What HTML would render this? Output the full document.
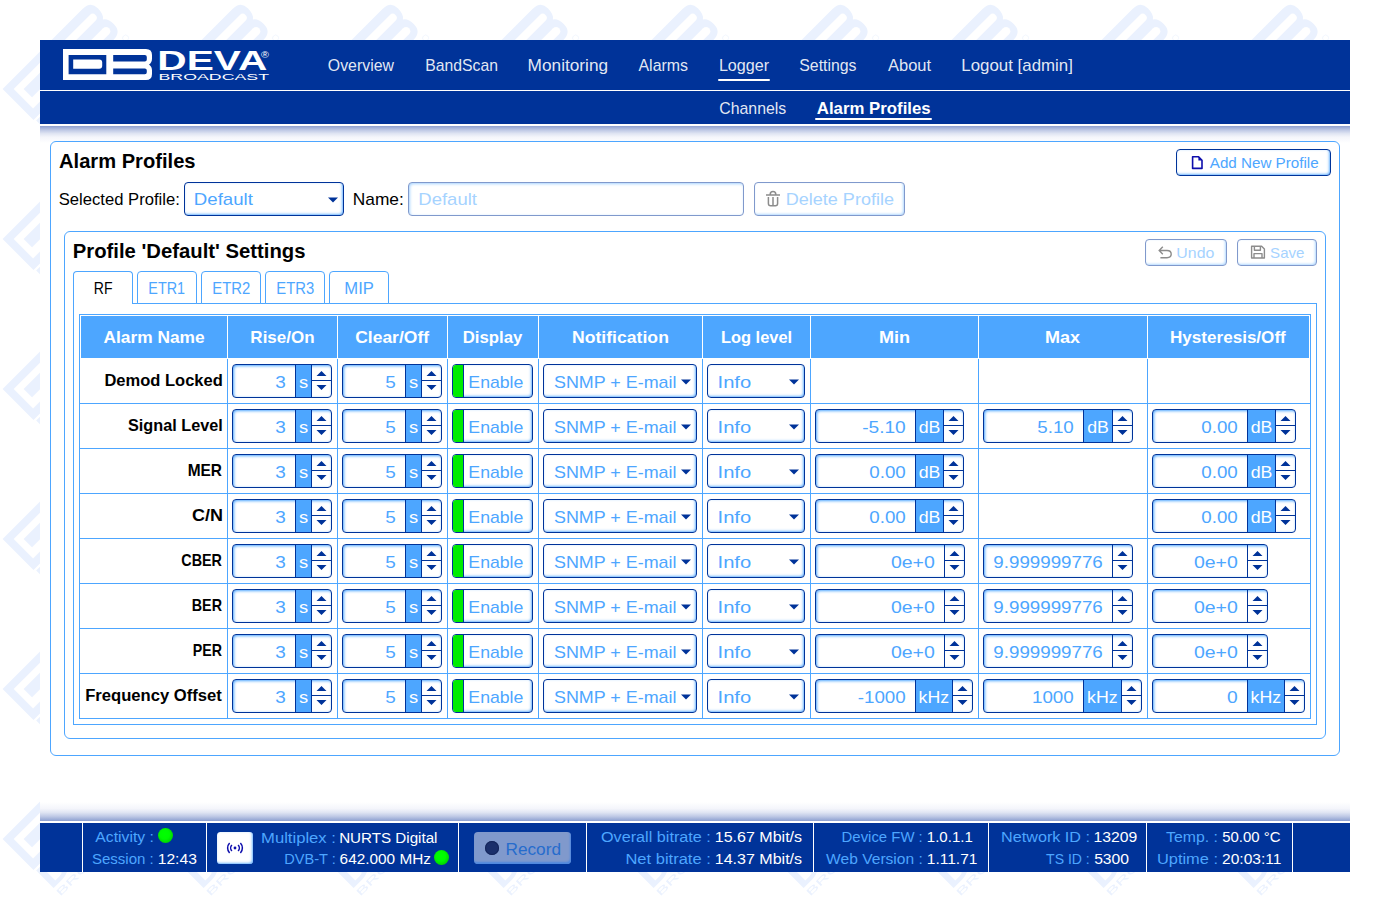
<!DOCTYPE html>
<html><head><meta charset="utf-8"><title>Alarm Profiles</title>
<style>
html,body{margin:0;padding:0}
body{width:1390px;height:912px;position:relative;overflow:hidden;background:#fff;font-family:"Liberation Sans", sans-serif}
body>div{position:absolute}
.c{box-sizing:border-box;border:1px solid #003399;border-radius:4px;background:#fff;overflow:hidden}
.c i{position:absolute;display:block;top:0;bottom:0}
.c{position:absolute}
.u{background:#4da6ff;border-left:1px solid #003399;box-sizing:border-box}
.sd{width:1px;background:#003399}
.c .sm{top:15px;bottom:auto;height:1px;right:0;background:#003399}
.g{left:0;width:10px;background:#00ec00;border-right:1px solid #003399}
svg text{font-family:"Liberation Sans", sans-serif}
</style></head><body>
<svg style="position:absolute;left:0;top:0" width="1390" height="912"><defs><pattern id="wm" width="150" height="150" patternUnits="userSpaceOnUse"><g transform="translate(2.6 89) rotate(-45)" fill="#eaf1fe"><path d="M0 0H113Q124.5 0 124.5 10.5Q124.5 19 120 21.8Q124.5 24.5 124.5 33Q124.5 43.7 113 43.7H0Z"/><g fill="#fff"><path d="M7.8 7.8H61V35.3H7.8Z"/><path d="M70.8 9.4H114a4.05 4.05 0 0 1 0 8.1H70.8Z"/><path d="M70.8 28H114a4.3 4.3 0 0 1 0 8.6H70.8Z"/></g><path d="M14.9 14.9H50a5.9 5.9 0 0 1 0 11.8H14.9Z"/><text x="-1.5" y="70.6" font-size="35.7" font-weight="bold" textLength="120" lengthAdjust="spacingAndGlyphs">DEVA</text><text x="0" y="81.5" font-size="10.2" textLength="125" lengthAdjust="spacingAndGlyphs">BROADCAST</text><circle cx="123" cy="51" r="3" fill="none" stroke="#eaf1fe" stroke-width="0.8" stroke-opacity="0.7"/></g></pattern></defs><rect width="1350" height="900" fill="url(#wm)"/></svg>
<div style="left:40px;top:40px;width:1310px;height:832px;background:#fff"></div>
<div style="left:40px;top:40px;width:1310px;height:50px;background:#003399"></div>
<div style="left:40px;top:91px;width:1310px;height:33px;background:#003399"></div>
<div style="left:40px;top:126px;width:1310px;height:17px;background:linear-gradient(to bottom,#8c9fd0 0%,#c0cae6 25%,#e0e5f3 45%,#f4f5fb 65%,#fff 100%)"></div>
<div style="left:40px;top:802px;width:1310px;height:19px;background:linear-gradient(to top,#8c9fd0 0%,#c0cae6 25%,#e0e5f3 45%,#f4f5fb 65%,#fff 100%)"></div>
<div style="left:40px;top:823px;width:1310px;height:49px;background:#003399"></div>
<div style="left:82px;top:823px;width:1px;height:49px;background:#fff"></div>
<div style="left:206px;top:823px;width:1px;height:49px;background:#fff"></div>
<div style="left:458px;top:823px;width:1px;height:49px;background:#fff"></div>
<div style="left:586px;top:823px;width:1px;height:49px;background:#fff"></div>
<div style="left:813px;top:823px;width:1px;height:49px;background:#fff"></div>
<div style="left:988px;top:823px;width:1px;height:49px;background:#fff"></div>
<div style="left:1146px;top:823px;width:1px;height:49px;background:#fff"></div>
<div style="left:1292px;top:823px;width:1px;height:49px;background:#fff"></div>
<div style="left:50px;top:141px;width:1290px;height:615px;border:1px solid #4da6ff;border-radius:6px;box-sizing:border-box;background:#fff"></div>
<div style="left:64px;top:231px;width:1262px;height:508px;border:1px solid #4da6ff;border-radius:6px;box-sizing:border-box;background:#fff"></div>
<div style="left:73px;top:303px;width:1244px;height:422px;border:1px solid #4da6ff;box-sizing:border-box;background:#fff"></div>
<div style="left:73px;top:271px;width:60px;height:33px;border:1px solid #4da6ff;border-bottom:none;border-radius:4px 4px 0 0;box-sizing:border-box;background:#fff"></div>
<div style="left:137px;top:271px;width:60px;height:33px;border:1px solid #4da6ff;border-radius:4px 4px 0 0;box-sizing:border-box;background:#fff"></div>
<div style="left:201px;top:271px;width:60px;height:33px;border:1px solid #4da6ff;border-radius:4px 4px 0 0;box-sizing:border-box;background:#fff"></div>
<div style="left:265px;top:271px;width:60px;height:33px;border:1px solid #4da6ff;border-radius:4px 4px 0 0;box-sizing:border-box;background:#fff"></div>
<div style="left:329px;top:271px;width:60px;height:33px;border:1px solid #4da6ff;border-radius:4px 4px 0 0;box-sizing:border-box;background:#fff"></div>
<div style="left:79px;top:314px;width:1232px;height:405px;border:1px solid #4da6ff;box-sizing:border-box"></div>
<div style="left:81px;top:316px;width:1228px;height:42px;background:#4da6ff"></div>
<div style="left:227px;top:316px;width:1px;height:42px;background:#fff"></div>
<div style="left:227px;top:359px;width:1px;height:359px;background:#4da6ff"></div>
<div style="left:337px;top:316px;width:1px;height:42px;background:#fff"></div>
<div style="left:337px;top:359px;width:1px;height:359px;background:#4da6ff"></div>
<div style="left:447px;top:316px;width:1px;height:42px;background:#fff"></div>
<div style="left:447px;top:359px;width:1px;height:359px;background:#4da6ff"></div>
<div style="left:538px;top:316px;width:1px;height:42px;background:#fff"></div>
<div style="left:538px;top:359px;width:1px;height:359px;background:#4da6ff"></div>
<div style="left:702px;top:316px;width:1px;height:42px;background:#fff"></div>
<div style="left:702px;top:359px;width:1px;height:359px;background:#4da6ff"></div>
<div style="left:810px;top:316px;width:1px;height:42px;background:#fff"></div>
<div style="left:810px;top:359px;width:1px;height:359px;background:#4da6ff"></div>
<div style="left:978px;top:316px;width:1px;height:42px;background:#fff"></div>
<div style="left:978px;top:359px;width:1px;height:359px;background:#4da6ff"></div>
<div style="left:1147px;top:316px;width:1px;height:42px;background:#fff"></div>
<div style="left:1147px;top:359px;width:1px;height:359px;background:#4da6ff"></div>
<div style="left:80px;top:403px;width:1230px;height:1px;background:#4da6ff"></div>
<div style="left:80px;top:448px;width:1230px;height:1px;background:#4da6ff"></div>
<div style="left:80px;top:493px;width:1230px;height:1px;background:#4da6ff"></div>
<div style="left:80px;top:538px;width:1230px;height:1px;background:#4da6ff"></div>
<div style="left:80px;top:583px;width:1230px;height:1px;background:#4da6ff"></div>
<div style="left:80px;top:628px;width:1230px;height:1px;background:#4da6ff"></div>
<div style="left:80px;top:673px;width:1230px;height:1px;background:#4da6ff"></div>
<div class="c" style="left:232px;top:364px;width:100px;height:34px;box-shadow:inset 1px 1px 3px #4da6ff;"><i class="u" style="left:62px;width:16px"></i><i class="sd" style="left:78px"></i><i class="sm" style="left:79px"></i></div>
<div class="c" style="left:342px;top:364px;width:100px;height:34px;box-shadow:inset 1px 1px 3px #4da6ff;"><i class="u" style="left:62px;width:16px"></i><i class="sd" style="left:78px"></i><i class="sm" style="left:79px"></i></div>
<div class="c" style="left:452px;top:364px;width:81px;height:34px;box-shadow:inset -1px -1px 2.5px rgba(77,166,255,.85);"><i class="g"></i></div>
<div class="c" style="left:543px;top:364px;width:154px;height:34px;box-shadow:inset -1px -1px 2.5px rgba(77,166,255,.85);"></div>
<div class="c" style="left:707px;top:364px;width:98px;height:34px;box-shadow:inset -1px -1px 2.5px rgba(77,166,255,.85);"></div>
<div class="c" style="left:232px;top:409px;width:100px;height:34px;box-shadow:inset 1px 1px 3px #4da6ff;"><i class="u" style="left:62px;width:16px"></i><i class="sd" style="left:78px"></i><i class="sm" style="left:79px"></i></div>
<div class="c" style="left:342px;top:409px;width:100px;height:34px;box-shadow:inset 1px 1px 3px #4da6ff;"><i class="u" style="left:62px;width:16px"></i><i class="sd" style="left:78px"></i><i class="sm" style="left:79px"></i></div>
<div class="c" style="left:452px;top:409px;width:81px;height:34px;box-shadow:inset -1px -1px 2.5px rgba(77,166,255,.85);"><i class="g"></i></div>
<div class="c" style="left:543px;top:409px;width:154px;height:34px;box-shadow:inset -1px -1px 2.5px rgba(77,166,255,.85);"></div>
<div class="c" style="left:707px;top:409px;width:98px;height:34px;box-shadow:inset -1px -1px 2.5px rgba(77,166,255,.85);"></div>
<div class="c" style="left:815px;top:409px;width:149px;height:34px;box-shadow:inset 1px 1px 3px #4da6ff;"><i class="u" style="left:99px;width:28px"></i><i class="sd" style="left:127px"></i><i class="sm" style="left:128px"></i></div>
<div class="c" style="left:983px;top:409px;width:150px;height:34px;box-shadow:inset 1px 1px 3px #4da6ff;"><i class="u" style="left:99px;width:29px"></i><i class="sd" style="left:128px"></i><i class="sm" style="left:129px"></i></div>
<div class="c" style="left:1152px;top:409px;width:144px;height:34px;box-shadow:inset 1px 1px 3px #4da6ff;"><i class="u" style="left:94px;width:28px"></i><i class="sd" style="left:122px"></i><i class="sm" style="left:123px"></i></div>
<div class="c" style="left:232px;top:454px;width:100px;height:34px;box-shadow:inset 1px 1px 3px #4da6ff;"><i class="u" style="left:62px;width:16px"></i><i class="sd" style="left:78px"></i><i class="sm" style="left:79px"></i></div>
<div class="c" style="left:342px;top:454px;width:100px;height:34px;box-shadow:inset 1px 1px 3px #4da6ff;"><i class="u" style="left:62px;width:16px"></i><i class="sd" style="left:78px"></i><i class="sm" style="left:79px"></i></div>
<div class="c" style="left:452px;top:454px;width:81px;height:34px;box-shadow:inset -1px -1px 2.5px rgba(77,166,255,.85);"><i class="g"></i></div>
<div class="c" style="left:543px;top:454px;width:154px;height:34px;box-shadow:inset -1px -1px 2.5px rgba(77,166,255,.85);"></div>
<div class="c" style="left:707px;top:454px;width:98px;height:34px;box-shadow:inset -1px -1px 2.5px rgba(77,166,255,.85);"></div>
<div class="c" style="left:815px;top:454px;width:149px;height:34px;box-shadow:inset 1px 1px 3px #4da6ff;"><i class="u" style="left:99px;width:28px"></i><i class="sd" style="left:127px"></i><i class="sm" style="left:128px"></i></div>
<div class="c" style="left:1152px;top:454px;width:144px;height:34px;box-shadow:inset 1px 1px 3px #4da6ff;"><i class="u" style="left:94px;width:28px"></i><i class="sd" style="left:122px"></i><i class="sm" style="left:123px"></i></div>
<div class="c" style="left:232px;top:499px;width:100px;height:34px;box-shadow:inset 1px 1px 3px #4da6ff;"><i class="u" style="left:62px;width:16px"></i><i class="sd" style="left:78px"></i><i class="sm" style="left:79px"></i></div>
<div class="c" style="left:342px;top:499px;width:100px;height:34px;box-shadow:inset 1px 1px 3px #4da6ff;"><i class="u" style="left:62px;width:16px"></i><i class="sd" style="left:78px"></i><i class="sm" style="left:79px"></i></div>
<div class="c" style="left:452px;top:499px;width:81px;height:34px;box-shadow:inset -1px -1px 2.5px rgba(77,166,255,.85);"><i class="g"></i></div>
<div class="c" style="left:543px;top:499px;width:154px;height:34px;box-shadow:inset -1px -1px 2.5px rgba(77,166,255,.85);"></div>
<div class="c" style="left:707px;top:499px;width:98px;height:34px;box-shadow:inset -1px -1px 2.5px rgba(77,166,255,.85);"></div>
<div class="c" style="left:815px;top:499px;width:149px;height:34px;box-shadow:inset 1px 1px 3px #4da6ff;"><i class="u" style="left:99px;width:28px"></i><i class="sd" style="left:127px"></i><i class="sm" style="left:128px"></i></div>
<div class="c" style="left:1152px;top:499px;width:144px;height:34px;box-shadow:inset 1px 1px 3px #4da6ff;"><i class="u" style="left:94px;width:28px"></i><i class="sd" style="left:122px"></i><i class="sm" style="left:123px"></i></div>
<div class="c" style="left:232px;top:544px;width:100px;height:34px;box-shadow:inset 1px 1px 3px #4da6ff;"><i class="u" style="left:62px;width:16px"></i><i class="sd" style="left:78px"></i><i class="sm" style="left:79px"></i></div>
<div class="c" style="left:342px;top:544px;width:100px;height:34px;box-shadow:inset 1px 1px 3px #4da6ff;"><i class="u" style="left:62px;width:16px"></i><i class="sd" style="left:78px"></i><i class="sm" style="left:79px"></i></div>
<div class="c" style="left:452px;top:544px;width:81px;height:34px;box-shadow:inset -1px -1px 2.5px rgba(77,166,255,.85);"><i class="g"></i></div>
<div class="c" style="left:543px;top:544px;width:154px;height:34px;box-shadow:inset -1px -1px 2.5px rgba(77,166,255,.85);"></div>
<div class="c" style="left:707px;top:544px;width:98px;height:34px;box-shadow:inset -1px -1px 2.5px rgba(77,166,255,.85);"></div>
<div class="c" style="left:815px;top:544px;width:150px;height:34px;box-shadow:inset 1px 1px 3px #4da6ff;"><i class="sd" style="left:128px"></i><i class="sm" style="left:129px"></i></div>
<div class="c" style="left:983px;top:544px;width:150px;height:34px;box-shadow:inset 1px 1px 3px #4da6ff;"><i class="sd" style="left:128px"></i><i class="sm" style="left:129px"></i></div>
<div class="c" style="left:1152px;top:544px;width:116px;height:34px;box-shadow:inset 1px 1px 3px #4da6ff;"><i class="sd" style="left:94px"></i><i class="sm" style="left:95px"></i></div>
<div class="c" style="left:232px;top:589px;width:100px;height:34px;box-shadow:inset 1px 1px 3px #4da6ff;"><i class="u" style="left:62px;width:16px"></i><i class="sd" style="left:78px"></i><i class="sm" style="left:79px"></i></div>
<div class="c" style="left:342px;top:589px;width:100px;height:34px;box-shadow:inset 1px 1px 3px #4da6ff;"><i class="u" style="left:62px;width:16px"></i><i class="sd" style="left:78px"></i><i class="sm" style="left:79px"></i></div>
<div class="c" style="left:452px;top:589px;width:81px;height:34px;box-shadow:inset -1px -1px 2.5px rgba(77,166,255,.85);"><i class="g"></i></div>
<div class="c" style="left:543px;top:589px;width:154px;height:34px;box-shadow:inset -1px -1px 2.5px rgba(77,166,255,.85);"></div>
<div class="c" style="left:707px;top:589px;width:98px;height:34px;box-shadow:inset -1px -1px 2.5px rgba(77,166,255,.85);"></div>
<div class="c" style="left:815px;top:589px;width:150px;height:34px;box-shadow:inset 1px 1px 3px #4da6ff;"><i class="sd" style="left:128px"></i><i class="sm" style="left:129px"></i></div>
<div class="c" style="left:983px;top:589px;width:150px;height:34px;box-shadow:inset 1px 1px 3px #4da6ff;"><i class="sd" style="left:128px"></i><i class="sm" style="left:129px"></i></div>
<div class="c" style="left:1152px;top:589px;width:116px;height:34px;box-shadow:inset 1px 1px 3px #4da6ff;"><i class="sd" style="left:94px"></i><i class="sm" style="left:95px"></i></div>
<div class="c" style="left:232px;top:634px;width:100px;height:34px;box-shadow:inset 1px 1px 3px #4da6ff;"><i class="u" style="left:62px;width:16px"></i><i class="sd" style="left:78px"></i><i class="sm" style="left:79px"></i></div>
<div class="c" style="left:342px;top:634px;width:100px;height:34px;box-shadow:inset 1px 1px 3px #4da6ff;"><i class="u" style="left:62px;width:16px"></i><i class="sd" style="left:78px"></i><i class="sm" style="left:79px"></i></div>
<div class="c" style="left:452px;top:634px;width:81px;height:34px;box-shadow:inset -1px -1px 2.5px rgba(77,166,255,.85);"><i class="g"></i></div>
<div class="c" style="left:543px;top:634px;width:154px;height:34px;box-shadow:inset -1px -1px 2.5px rgba(77,166,255,.85);"></div>
<div class="c" style="left:707px;top:634px;width:98px;height:34px;box-shadow:inset -1px -1px 2.5px rgba(77,166,255,.85);"></div>
<div class="c" style="left:815px;top:634px;width:150px;height:34px;box-shadow:inset 1px 1px 3px #4da6ff;"><i class="sd" style="left:128px"></i><i class="sm" style="left:129px"></i></div>
<div class="c" style="left:983px;top:634px;width:150px;height:34px;box-shadow:inset 1px 1px 3px #4da6ff;"><i class="sd" style="left:128px"></i><i class="sm" style="left:129px"></i></div>
<div class="c" style="left:1152px;top:634px;width:116px;height:34px;box-shadow:inset 1px 1px 3px #4da6ff;"><i class="sd" style="left:94px"></i><i class="sm" style="left:95px"></i></div>
<div class="c" style="left:232px;top:679px;width:100px;height:34px;box-shadow:inset 1px 1px 3px #4da6ff;"><i class="u" style="left:62px;width:16px"></i><i class="sd" style="left:78px"></i><i class="sm" style="left:79px"></i></div>
<div class="c" style="left:342px;top:679px;width:100px;height:34px;box-shadow:inset 1px 1px 3px #4da6ff;"><i class="u" style="left:62px;width:16px"></i><i class="sd" style="left:78px"></i><i class="sm" style="left:79px"></i></div>
<div class="c" style="left:452px;top:679px;width:81px;height:34px;box-shadow:inset -1px -1px 2.5px rgba(77,166,255,.85);"><i class="g"></i></div>
<div class="c" style="left:543px;top:679px;width:154px;height:34px;box-shadow:inset -1px -1px 2.5px rgba(77,166,255,.85);"></div>
<div class="c" style="left:707px;top:679px;width:98px;height:34px;box-shadow:inset -1px -1px 2.5px rgba(77,166,255,.85);"></div>
<div class="c" style="left:815px;top:679px;width:158px;height:34px;box-shadow:inset 1px 1px 3px #4da6ff;"><i class="u" style="left:99px;width:37px"></i><i class="sd" style="left:136px"></i><i class="sm" style="left:137px"></i></div>
<div class="c" style="left:983px;top:679px;width:159px;height:34px;box-shadow:inset 1px 1px 3px #4da6ff;"><i class="u" style="left:99px;width:38px"></i><i class="sd" style="left:137px"></i><i class="sm" style="left:138px"></i></div>
<div class="c" style="left:1152px;top:679px;width:153px;height:34px;box-shadow:inset 1px 1px 3px #4da6ff;"><i class="u" style="left:94px;width:37px"></i><i class="sd" style="left:131px"></i><i class="sm" style="left:132px"></i></div>
<div class="c" style="left:184px;top:182px;width:160px;height:34px;box-shadow:inset -1px -1px 2.5px rgba(77,166,255,.85);"></div>
<div class="c" style="left:408px;top:182px;width:336px;height:34px;box-shadow:inset 1px 1px 3px #a6d3ff;border-color:#8099cc"></div>
<div class="c" style="left:754px;top:182px;width:151px;height:34px;box-shadow:inset -1px -1px 2.5px #b0d8ff;border-color:#8099cc"></div>
<div class="c" style="left:1176px;top:149px;width:155px;height:27px;box-shadow:inset -1px -1px 2.5px rgba(77,166,255,.85);"></div>
<div class="c" style="left:1145px;top:239px;width:82px;height:27px;box-shadow:inset -1px -1px 2.5px #b0d8ff;border-color:#8099cc"></div>
<div class="c" style="left:1237px;top:239px;width:80px;height:27px;box-shadow:inset -1px -1px 2.5px #b0d8ff;border-color:#8099cc"></div>
<div style="left:717.5px;top:79px;width:52.4px;height:2px;background:#fff;border-radius:1px"></div>
<div style="left:815.3px;top:118px;width:116.5px;height:2px;background:#fff;border-radius:1px"></div>
<div style="left:158.0px;top:827.9px;width:15px;height:15px;border-radius:50%;background:radial-gradient(circle at 45% 42%,#00ff00 0%,#00fa00 40%,#00cc00 80%,#00a010 100%)"></div>
<div style="left:434.0px;top:849.9px;width:15px;height:15px;border-radius:50%;background:radial-gradient(circle at 45% 42%,#00ff00 0%,#00fa00 40%,#00cc00 80%,#00a010 100%)"></div>
<div style="left:217px;top:832px;width:36px;height:32px;background:#fff;border-radius:3.5px;box-shadow:inset -1px -1px 2.5px rgba(77,166,255,.85)"></div>
<div style="left:474px;top:832px;width:97px;height:32px;background:#8099cc;border-radius:4px;box-shadow:inset -1px -2px 2px #4d88e0"></div>
<div style="left:484.7px;top:840.7px;width:14.4px;height:14.4px;border-radius:50%;background:#1b2f6b;box-shadow:inset 0 0 0 1px #15265c"></div>
<svg style="position:absolute;left:0;top:0" width="1390" height="912" font-family='"Liberation Sans", sans-serif'>
<text x="222.79" y="386" font-size="16.9" font-weight="bold" fill="#000" text-anchor="end" textLength="118.39" lengthAdjust="spacingAndGlyphs">Demod Locked</text>
<path d="M316.5 376h10l-5 -5zM316.5 385h10l-5 5z" fill="#003399"/>
<text x="285.83" y="388" font-size="17" fill="#4da6ff" text-anchor="end" textLength="10.56" lengthAdjust="spacingAndGlyphs">3</text>
<text x="303.58" y="388" font-size="17.2" fill="#fff" text-anchor="middle" textLength="9.17" lengthAdjust="spacingAndGlyphs">s</text>
<path d="M426.5 376h10l-5 -5zM426.5 385h10l-5 5z" fill="#003399"/>
<text x="395.8" y="388" font-size="17" fill="#4da6ff" text-anchor="end" textLength="10.56" lengthAdjust="spacingAndGlyphs">5</text>
<text x="413.58" y="388" font-size="17.2" fill="#fff" text-anchor="middle" textLength="9.17" lengthAdjust="spacingAndGlyphs">s</text>
<text x="468.35" y="388" font-size="17" fill="#4da6ff" text-anchor="start" textLength="55.04" lengthAdjust="spacingAndGlyphs">Enable</text>
<text x="553.99" y="388" font-size="17" fill="#4da6ff" text-anchor="start" textLength="122.5" lengthAdjust="spacingAndGlyphs">SNMP + E-mail</text>
<path d="M681 379.5h10l-5 5z" fill="#003399"/>
<text x="717.53" y="388" font-size="17" fill="#4da6ff" text-anchor="start" textLength="33.71" lengthAdjust="spacingAndGlyphs">Info</text>
<path d="M789 379.5h10l-5 5z" fill="#003399"/>
<text x="222.85" y="431" font-size="16.9" font-weight="bold" fill="#000" text-anchor="end" textLength="94.82" lengthAdjust="spacingAndGlyphs">Signal Level</text>
<path d="M316.5 421h10l-5 -5zM316.5 430h10l-5 5z" fill="#003399"/>
<text x="285.83" y="433" font-size="17" fill="#4da6ff" text-anchor="end" textLength="10.56" lengthAdjust="spacingAndGlyphs">3</text>
<text x="303.58" y="433" font-size="17.2" fill="#fff" text-anchor="middle" textLength="9.17" lengthAdjust="spacingAndGlyphs">s</text>
<path d="M426.5 421h10l-5 -5zM426.5 430h10l-5 5z" fill="#003399"/>
<text x="395.8" y="433" font-size="17" fill="#4da6ff" text-anchor="end" textLength="10.56" lengthAdjust="spacingAndGlyphs">5</text>
<text x="413.58" y="433" font-size="17.2" fill="#fff" text-anchor="middle" textLength="9.17" lengthAdjust="spacingAndGlyphs">s</text>
<text x="468.35" y="433" font-size="17" fill="#4da6ff" text-anchor="start" textLength="55.04" lengthAdjust="spacingAndGlyphs">Enable</text>
<text x="553.99" y="433" font-size="17" fill="#4da6ff" text-anchor="start" textLength="122.5" lengthAdjust="spacingAndGlyphs">SNMP + E-mail</text>
<path d="M681 424.5h10l-5 5z" fill="#003399"/>
<text x="717.53" y="433" font-size="17" fill="#4da6ff" text-anchor="start" textLength="33.71" lengthAdjust="spacingAndGlyphs">Info</text>
<path d="M789 424.5h10l-5 5z" fill="#003399"/>
<path d="M948.5 421h10l-5 -5zM948.5 430h10l-5 5z" fill="#003399"/>
<text x="905.75" y="433" font-size="17" fill="#4da6ff" text-anchor="end" textLength="43.6" lengthAdjust="spacingAndGlyphs">-5.10</text>
<text x="929.6" y="433" font-size="17.2" fill="#fff" text-anchor="middle" textLength="21.68" lengthAdjust="spacingAndGlyphs">dB</text>
<path d="M1117.5 421h10l-5 -5zM1117.5 430h10l-5 5z" fill="#003399"/>
<text x="1073.73" y="433" font-size="17" fill="#4da6ff" text-anchor="end" textLength="36.48" lengthAdjust="spacingAndGlyphs">5.10</text>
<text x="1098.1" y="433" font-size="17.2" fill="#fff" text-anchor="middle" textLength="21.68" lengthAdjust="spacingAndGlyphs">dB</text>
<path d="M1280.5 421h10l-5 -5zM1280.5 430h10l-5 5z" fill="#003399"/>
<text x="1237.73" y="433" font-size="17" fill="#4da6ff" text-anchor="end" textLength="36.46" lengthAdjust="spacingAndGlyphs">0.00</text>
<text x="1261.6" y="433" font-size="17.2" fill="#fff" text-anchor="middle" textLength="21.68" lengthAdjust="spacingAndGlyphs">dB</text>
<text x="222.02" y="476" font-size="16.9" font-weight="bold" fill="#000" text-anchor="end" textLength="34.35" lengthAdjust="spacingAndGlyphs">MER</text>
<path d="M316.5 466h10l-5 -5zM316.5 475h10l-5 5z" fill="#003399"/>
<text x="285.83" y="478" font-size="17" fill="#4da6ff" text-anchor="end" textLength="10.56" lengthAdjust="spacingAndGlyphs">3</text>
<text x="303.58" y="478" font-size="17.2" fill="#fff" text-anchor="middle" textLength="9.17" lengthAdjust="spacingAndGlyphs">s</text>
<path d="M426.5 466h10l-5 -5zM426.5 475h10l-5 5z" fill="#003399"/>
<text x="395.8" y="478" font-size="17" fill="#4da6ff" text-anchor="end" textLength="10.56" lengthAdjust="spacingAndGlyphs">5</text>
<text x="413.58" y="478" font-size="17.2" fill="#fff" text-anchor="middle" textLength="9.17" lengthAdjust="spacingAndGlyphs">s</text>
<text x="468.35" y="478" font-size="17" fill="#4da6ff" text-anchor="start" textLength="55.04" lengthAdjust="spacingAndGlyphs">Enable</text>
<text x="553.99" y="478" font-size="17" fill="#4da6ff" text-anchor="start" textLength="122.5" lengthAdjust="spacingAndGlyphs">SNMP + E-mail</text>
<path d="M681 469.5h10l-5 5z" fill="#003399"/>
<text x="717.53" y="478" font-size="17" fill="#4da6ff" text-anchor="start" textLength="33.71" lengthAdjust="spacingAndGlyphs">Info</text>
<path d="M789 469.5h10l-5 5z" fill="#003399"/>
<path d="M948.5 466h10l-5 -5zM948.5 475h10l-5 5z" fill="#003399"/>
<text x="905.73" y="478" font-size="17" fill="#4da6ff" text-anchor="end" textLength="36.46" lengthAdjust="spacingAndGlyphs">0.00</text>
<text x="929.6" y="478" font-size="17.2" fill="#fff" text-anchor="middle" textLength="21.68" lengthAdjust="spacingAndGlyphs">dB</text>
<path d="M1280.5 466h10l-5 -5zM1280.5 475h10l-5 5z" fill="#003399"/>
<text x="1237.73" y="478" font-size="17" fill="#4da6ff" text-anchor="end" textLength="36.46" lengthAdjust="spacingAndGlyphs">0.00</text>
<text x="1261.6" y="478" font-size="17.2" fill="#fff" text-anchor="middle" textLength="21.68" lengthAdjust="spacingAndGlyphs">dB</text>
<text x="222.91" y="521" font-size="16.9" font-weight="bold" fill="#000" text-anchor="end" textLength="30.95" lengthAdjust="spacingAndGlyphs">C/N</text>
<path d="M316.5 511h10l-5 -5zM316.5 520h10l-5 5z" fill="#003399"/>
<text x="285.83" y="523" font-size="17" fill="#4da6ff" text-anchor="end" textLength="10.56" lengthAdjust="spacingAndGlyphs">3</text>
<text x="303.58" y="523" font-size="17.2" fill="#fff" text-anchor="middle" textLength="9.17" lengthAdjust="spacingAndGlyphs">s</text>
<path d="M426.5 511h10l-5 -5zM426.5 520h10l-5 5z" fill="#003399"/>
<text x="395.8" y="523" font-size="17" fill="#4da6ff" text-anchor="end" textLength="10.56" lengthAdjust="spacingAndGlyphs">5</text>
<text x="413.58" y="523" font-size="17.2" fill="#fff" text-anchor="middle" textLength="9.17" lengthAdjust="spacingAndGlyphs">s</text>
<text x="468.35" y="523" font-size="17" fill="#4da6ff" text-anchor="start" textLength="55.04" lengthAdjust="spacingAndGlyphs">Enable</text>
<text x="553.99" y="523" font-size="17" fill="#4da6ff" text-anchor="start" textLength="122.5" lengthAdjust="spacingAndGlyphs">SNMP + E-mail</text>
<path d="M681 514.5h10l-5 5z" fill="#003399"/>
<text x="717.53" y="523" font-size="17" fill="#4da6ff" text-anchor="start" textLength="33.71" lengthAdjust="spacingAndGlyphs">Info</text>
<path d="M789 514.5h10l-5 5z" fill="#003399"/>
<path d="M948.5 511h10l-5 -5zM948.5 520h10l-5 5z" fill="#003399"/>
<text x="905.73" y="523" font-size="17" fill="#4da6ff" text-anchor="end" textLength="36.46" lengthAdjust="spacingAndGlyphs">0.00</text>
<text x="929.6" y="523" font-size="17.2" fill="#fff" text-anchor="middle" textLength="21.68" lengthAdjust="spacingAndGlyphs">dB</text>
<path d="M1280.5 511h10l-5 -5zM1280.5 520h10l-5 5z" fill="#003399"/>
<text x="1237.73" y="523" font-size="17" fill="#4da6ff" text-anchor="end" textLength="36.46" lengthAdjust="spacingAndGlyphs">0.00</text>
<text x="1261.6" y="523" font-size="17.2" fill="#fff" text-anchor="middle" textLength="21.68" lengthAdjust="spacingAndGlyphs">dB</text>
<text x="221.99" y="566" font-size="16.9" font-weight="bold" fill="#000" text-anchor="end" textLength="40.68" lengthAdjust="spacingAndGlyphs">CBER</text>
<path d="M316.5 556h10l-5 -5zM316.5 565h10l-5 5z" fill="#003399"/>
<text x="285.83" y="568" font-size="17" fill="#4da6ff" text-anchor="end" textLength="10.56" lengthAdjust="spacingAndGlyphs">3</text>
<text x="303.58" y="568" font-size="17.2" fill="#fff" text-anchor="middle" textLength="9.17" lengthAdjust="spacingAndGlyphs">s</text>
<path d="M426.5 556h10l-5 -5zM426.5 565h10l-5 5z" fill="#003399"/>
<text x="395.8" y="568" font-size="17" fill="#4da6ff" text-anchor="end" textLength="10.56" lengthAdjust="spacingAndGlyphs">5</text>
<text x="413.58" y="568" font-size="17.2" fill="#fff" text-anchor="middle" textLength="9.17" lengthAdjust="spacingAndGlyphs">s</text>
<text x="468.35" y="568" font-size="17" fill="#4da6ff" text-anchor="start" textLength="55.04" lengthAdjust="spacingAndGlyphs">Enable</text>
<text x="553.99" y="568" font-size="17" fill="#4da6ff" text-anchor="start" textLength="122.5" lengthAdjust="spacingAndGlyphs">SNMP + E-mail</text>
<path d="M681 559.5h10l-5 5z" fill="#003399"/>
<text x="717.53" y="568" font-size="17" fill="#4da6ff" text-anchor="start" textLength="33.71" lengthAdjust="spacingAndGlyphs">Info</text>
<path d="M789 559.5h10l-5 5z" fill="#003399"/>
<path d="M949.5 556h10l-5 -5zM949.5 565h10l-5 5z" fill="#003399"/>
<text x="934.76" y="568" font-size="17" fill="#4da6ff" text-anchor="end" textLength="43.82" lengthAdjust="spacingAndGlyphs">0e+0</text>
<path d="M1117.5 556h10l-5 -5zM1117.5 565h10l-5 5z" fill="#003399"/>
<text x="1102.82" y="568" font-size="17" fill="#4da6ff" text-anchor="end" textLength="109.5" lengthAdjust="spacingAndGlyphs">9.999999776</text>
<path d="M1252.5 556h10l-5 -5zM1252.5 565h10l-5 5z" fill="#003399"/>
<text x="1237.76" y="568" font-size="17" fill="#4da6ff" text-anchor="end" textLength="43.82" lengthAdjust="spacingAndGlyphs">0e+0</text>
<text x="221.99" y="611" font-size="16.9" font-weight="bold" fill="#000" text-anchor="end" textLength="30.25" lengthAdjust="spacingAndGlyphs">BER</text>
<path d="M316.5 601h10l-5 -5zM316.5 610h10l-5 5z" fill="#003399"/>
<text x="285.83" y="613" font-size="17" fill="#4da6ff" text-anchor="end" textLength="10.56" lengthAdjust="spacingAndGlyphs">3</text>
<text x="303.58" y="613" font-size="17.2" fill="#fff" text-anchor="middle" textLength="9.17" lengthAdjust="spacingAndGlyphs">s</text>
<path d="M426.5 601h10l-5 -5zM426.5 610h10l-5 5z" fill="#003399"/>
<text x="395.8" y="613" font-size="17" fill="#4da6ff" text-anchor="end" textLength="10.56" lengthAdjust="spacingAndGlyphs">5</text>
<text x="413.58" y="613" font-size="17.2" fill="#fff" text-anchor="middle" textLength="9.17" lengthAdjust="spacingAndGlyphs">s</text>
<text x="468.35" y="613" font-size="17" fill="#4da6ff" text-anchor="start" textLength="55.04" lengthAdjust="spacingAndGlyphs">Enable</text>
<text x="553.99" y="613" font-size="17" fill="#4da6ff" text-anchor="start" textLength="122.5" lengthAdjust="spacingAndGlyphs">SNMP + E-mail</text>
<path d="M681 604.5h10l-5 5z" fill="#003399"/>
<text x="717.53" y="613" font-size="17" fill="#4da6ff" text-anchor="start" textLength="33.71" lengthAdjust="spacingAndGlyphs">Info</text>
<path d="M789 604.5h10l-5 5z" fill="#003399"/>
<path d="M949.5 601h10l-5 -5zM949.5 610h10l-5 5z" fill="#003399"/>
<text x="934.76" y="613" font-size="17" fill="#4da6ff" text-anchor="end" textLength="43.82" lengthAdjust="spacingAndGlyphs">0e+0</text>
<path d="M1117.5 601h10l-5 -5zM1117.5 610h10l-5 5z" fill="#003399"/>
<text x="1102.82" y="613" font-size="17" fill="#4da6ff" text-anchor="end" textLength="109.5" lengthAdjust="spacingAndGlyphs">9.999999776</text>
<path d="M1252.5 601h10l-5 -5zM1252.5 610h10l-5 5z" fill="#003399"/>
<text x="1237.76" y="613" font-size="17" fill="#4da6ff" text-anchor="end" textLength="43.82" lengthAdjust="spacingAndGlyphs">0e+0</text>
<text x="221.99" y="656" font-size="16.9" font-weight="bold" fill="#000" text-anchor="end" textLength="29.24" lengthAdjust="spacingAndGlyphs">PER</text>
<path d="M316.5 646h10l-5 -5zM316.5 655h10l-5 5z" fill="#003399"/>
<text x="285.83" y="658" font-size="17" fill="#4da6ff" text-anchor="end" textLength="10.56" lengthAdjust="spacingAndGlyphs">3</text>
<text x="303.58" y="658" font-size="17.2" fill="#fff" text-anchor="middle" textLength="9.17" lengthAdjust="spacingAndGlyphs">s</text>
<path d="M426.5 646h10l-5 -5zM426.5 655h10l-5 5z" fill="#003399"/>
<text x="395.8" y="658" font-size="17" fill="#4da6ff" text-anchor="end" textLength="10.56" lengthAdjust="spacingAndGlyphs">5</text>
<text x="413.58" y="658" font-size="17.2" fill="#fff" text-anchor="middle" textLength="9.17" lengthAdjust="spacingAndGlyphs">s</text>
<text x="468.35" y="658" font-size="17" fill="#4da6ff" text-anchor="start" textLength="55.04" lengthAdjust="spacingAndGlyphs">Enable</text>
<text x="553.99" y="658" font-size="17" fill="#4da6ff" text-anchor="start" textLength="122.5" lengthAdjust="spacingAndGlyphs">SNMP + E-mail</text>
<path d="M681 649.5h10l-5 5z" fill="#003399"/>
<text x="717.53" y="658" font-size="17" fill="#4da6ff" text-anchor="start" textLength="33.71" lengthAdjust="spacingAndGlyphs">Info</text>
<path d="M789 649.5h10l-5 5z" fill="#003399"/>
<path d="M949.5 646h10l-5 -5zM949.5 655h10l-5 5z" fill="#003399"/>
<text x="934.76" y="658" font-size="17" fill="#4da6ff" text-anchor="end" textLength="43.82" lengthAdjust="spacingAndGlyphs">0e+0</text>
<path d="M1117.5 646h10l-5 -5zM1117.5 655h10l-5 5z" fill="#003399"/>
<text x="1102.82" y="658" font-size="17" fill="#4da6ff" text-anchor="end" textLength="109.5" lengthAdjust="spacingAndGlyphs">9.999999776</text>
<path d="M1252.5 646h10l-5 -5zM1252.5 655h10l-5 5z" fill="#003399"/>
<text x="1237.76" y="658" font-size="17" fill="#4da6ff" text-anchor="end" textLength="43.82" lengthAdjust="spacingAndGlyphs">0e+0</text>
<text x="221.9" y="701" font-size="16.9" font-weight="bold" fill="#000" text-anchor="end" textLength="136.71" lengthAdjust="spacingAndGlyphs">Frequency Offset</text>
<path d="M316.5 691h10l-5 -5zM316.5 700h10l-5 5z" fill="#003399"/>
<text x="285.83" y="703" font-size="17" fill="#4da6ff" text-anchor="end" textLength="10.56" lengthAdjust="spacingAndGlyphs">3</text>
<text x="303.58" y="703" font-size="17.2" fill="#fff" text-anchor="middle" textLength="9.17" lengthAdjust="spacingAndGlyphs">s</text>
<path d="M426.5 691h10l-5 -5zM426.5 700h10l-5 5z" fill="#003399"/>
<text x="395.8" y="703" font-size="17" fill="#4da6ff" text-anchor="end" textLength="10.56" lengthAdjust="spacingAndGlyphs">5</text>
<text x="413.58" y="703" font-size="17.2" fill="#fff" text-anchor="middle" textLength="9.17" lengthAdjust="spacingAndGlyphs">s</text>
<text x="468.35" y="703" font-size="17" fill="#4da6ff" text-anchor="start" textLength="55.04" lengthAdjust="spacingAndGlyphs">Enable</text>
<text x="553.99" y="703" font-size="17" fill="#4da6ff" text-anchor="start" textLength="122.5" lengthAdjust="spacingAndGlyphs">SNMP + E-mail</text>
<path d="M681 694.5h10l-5 5z" fill="#003399"/>
<text x="717.53" y="703" font-size="17" fill="#4da6ff" text-anchor="start" textLength="33.71" lengthAdjust="spacingAndGlyphs">Info</text>
<path d="M789 694.5h10l-5 5z" fill="#003399"/>
<path d="M957.5 691h10l-5 -5zM957.5 700h10l-5 5z" fill="#003399"/>
<text x="905.73" y="703" font-size="17" fill="#4da6ff" text-anchor="end" textLength="47.97" lengthAdjust="spacingAndGlyphs">-1000</text>
<text x="933.84" y="703" font-size="17.2" fill="#fff" text-anchor="middle" textLength="30.58" lengthAdjust="spacingAndGlyphs">kHz</text>
<path d="M1126.5 691h10l-5 -5zM1126.5 700h10l-5 5z" fill="#003399"/>
<text x="1073.73" y="703" font-size="17" fill="#4da6ff" text-anchor="end" textLength="41.76" lengthAdjust="spacingAndGlyphs">1000</text>
<text x="1102.34" y="703" font-size="17.2" fill="#fff" text-anchor="middle" textLength="30.58" lengthAdjust="spacingAndGlyphs">kHz</text>
<path d="M1289.5 691h10l-5 -5zM1289.5 700h10l-5 5z" fill="#003399"/>
<text x="1237.75" y="703" font-size="17" fill="#4da6ff" text-anchor="end" textLength="10.7" lengthAdjust="spacingAndGlyphs">0</text>
<text x="1265.84" y="703" font-size="17.2" fill="#fff" text-anchor="middle" textLength="30.58" lengthAdjust="spacingAndGlyphs">kHz</text>
<text x="154.08" y="343" font-size="16.9" font-weight="bold" fill="#fff" text-anchor="middle" textLength="101.22" lengthAdjust="spacingAndGlyphs">Alarm Name</text>
<text x="282.46" y="343" font-size="16.9" font-weight="bold" fill="#fff" text-anchor="middle" textLength="64.19" lengthAdjust="spacingAndGlyphs">Rise/On</text>
<text x="392.12" y="343" font-size="16.9" font-weight="bold" fill="#fff" text-anchor="middle" textLength="73.88" lengthAdjust="spacingAndGlyphs">Clear/Off</text>
<text x="492.48" y="343" font-size="16.9" font-weight="bold" fill="#fff" text-anchor="middle" textLength="59.61" lengthAdjust="spacingAndGlyphs">Display</text>
<text x="620.46" y="343" font-size="16.9" font-weight="bold" fill="#fff" text-anchor="middle" textLength="96.87" lengthAdjust="spacingAndGlyphs">Notification</text>
<text x="756.53" y="343" font-size="16.9" font-weight="bold" fill="#fff" text-anchor="middle" textLength="71.26" lengthAdjust="spacingAndGlyphs">Log level</text>
<text x="894.46" y="343" font-size="16.9" font-weight="bold" fill="#fff" text-anchor="middle" textLength="31.13" lengthAdjust="spacingAndGlyphs">Min</text>
<text x="1062.46" y="343" font-size="16.9" font-weight="bold" fill="#fff" text-anchor="middle" textLength="35.04" lengthAdjust="spacingAndGlyphs">Max</text>
<text x="1227.91" y="343" font-size="16.9" font-weight="bold" fill="#fff" text-anchor="middle" textLength="115.71" lengthAdjust="spacingAndGlyphs">Hysteresis/Off</text>
<text x="59.0" y="168" font-size="19.8" font-weight="bold" fill="#000" text-anchor="start" textLength="136.53" lengthAdjust="spacingAndGlyphs">Alarm Profiles</text>
<text x="58.74" y="204.7" font-size="17" fill="#000" text-anchor="start" textLength="121.07" lengthAdjust="spacingAndGlyphs">Selected Profile:</text>
<text x="193.87" y="205" font-size="17" fill="#4da6ff" text-anchor="start" textLength="58.96" lengthAdjust="spacingAndGlyphs">Default</text>
<path d="M328 197.5h10l-5 5z" fill="#003399"/>
<text x="352.78" y="204.7" font-size="17" fill="#000" text-anchor="start" textLength="51.0" lengthAdjust="spacingAndGlyphs">Name:</text>
<text x="418.38" y="205" font-size="17" fill="#a6d3ff" text-anchor="start" textLength="58.55" lengthAdjust="spacingAndGlyphs">Default</text>
<text x="785.72" y="205" font-size="17" fill="#a6d3ff" text-anchor="start" textLength="108.28" lengthAdjust="spacingAndGlyphs">Delete Profile</text>
<g fill="none" stroke="#8c8c8c" stroke-width="1.5"><path d="M766 195h14M770.2 194.6c0-2.2 1.2-3 2.8-3s2.8 .8 2.8 3M768.4 197v6.4c0 1.5 .8 2.3 2.3 2.3h4.6c1.5 0 2.3-.8 2.3-2.3v-6.4M773 197v8.5"/></g>
<text x="1209.77" y="168" font-size="14.4" fill="#4da6ff" text-anchor="start" textLength="108.9" lengthAdjust="spacingAndGlyphs">Add New Profile</text>
<path d="M1192.6 156.8h6l3.4 3.4v8.2h-9.4z" fill="none" stroke="#0d0dac" stroke-width="1.6" stroke-linejoin="round"/><path d="M1198.4 156.8v3.6h3.6z" fill="#0d0dac"/>
<text x="72.84" y="258" font-size="19.8" font-weight="bold" fill="#000" text-anchor="start" textLength="232.59" lengthAdjust="spacingAndGlyphs">Profile 'Default' Settings</text>
<text x="1176.38" y="257.8" font-size="14.4" fill="#a6d3ff" text-anchor="start" textLength="37.89" lengthAdjust="spacingAndGlyphs">Undo</text>
<text x="1270.12" y="257.8" font-size="14.4" fill="#a6d3ff" text-anchor="start" textLength="34.35" lengthAdjust="spacingAndGlyphs">Save</text>
<g fill="none" stroke="#8c8c8c" stroke-width="1.4"><path d="M1162.8 246.8l-3.6 3.7 3.6 3.7M1159.4 250.5h7.6c2.6 0 4.2 1.5 4.2 3.6s-1.6 3.6-4.2 3.6h-6.6"/></g>
<g fill="none" stroke="#8c8c8c" stroke-width="1.4" stroke-linejoin="round"><path d="M1251.6 246.2h10l2.8 2.8v9h-12.8z"/><path d="M1254.4 246.4v3.8h6v-3.8M1254 258v-4.4h8v4.4"/></g>
<text x="93.85" y="294" font-size="17" fill="#000" text-anchor="start" textLength="18.71" lengthAdjust="spacingAndGlyphs">RF</text>
<text x="148.32" y="294" font-size="17" fill="#4da6ff" text-anchor="start" textLength="36.68" lengthAdjust="spacingAndGlyphs">ETR1</text>
<text x="212.28" y="294" font-size="17" fill="#4da6ff" text-anchor="start" textLength="37.97" lengthAdjust="spacingAndGlyphs">ETR2</text>
<text x="276.28" y="294" font-size="17" fill="#4da6ff" text-anchor="start" textLength="37.87" lengthAdjust="spacingAndGlyphs">ETR3</text>
<text x="344.34" y="294" font-size="17" fill="#4da6ff" text-anchor="start" textLength="29.54" lengthAdjust="spacingAndGlyphs">MIP</text>
<text x="327.85" y="70.9" font-size="17" fill="#fff" text-anchor="start" textLength="66.11" lengthAdjust="spacingAndGlyphs" fill-opacity=".9">Overview</text>
<text x="425.21" y="70.9" font-size="17" fill="#fff" text-anchor="start" textLength="72.82" lengthAdjust="spacingAndGlyphs" fill-opacity=".9">BandScan</text>
<text x="527.59" y="70.9" font-size="17" fill="#fff" text-anchor="start" textLength="80.53" lengthAdjust="spacingAndGlyphs" fill-opacity=".9">Monitoring</text>
<text x="638.47" y="70.9" font-size="17" fill="#fff" text-anchor="start" textLength="49.61" lengthAdjust="spacingAndGlyphs" fill-opacity=".9">Alarms</text>
<text x="718.88" y="70.9" font-size="17" fill="#fff" text-anchor="start" textLength="50.19" lengthAdjust="spacingAndGlyphs" fill-opacity=".9">Logger</text>
<text x="799.28" y="70.9" font-size="17" fill="#fff" text-anchor="start" textLength="57.29" lengthAdjust="spacingAndGlyphs" fill-opacity=".9">Settings</text>
<text x="887.97" y="70.9" font-size="17" fill="#fff" text-anchor="start" textLength="43.15" lengthAdjust="spacingAndGlyphs" fill-opacity=".9">About</text>
<text x="961.32" y="70.9" font-size="17" fill="#fff" text-anchor="start" textLength="111.59" lengthAdjust="spacingAndGlyphs" fill-opacity=".9">Logout [admin]</text>
<text x="719.19" y="113.8" font-size="17" fill="#fff" text-anchor="start" textLength="67.08" lengthAdjust="spacingAndGlyphs" fill-opacity=".9">Channels</text>
<text x="816.78" y="113.8" font-size="16.9" font-weight="bold" fill="#fff" text-anchor="start" textLength="113.91" lengthAdjust="spacingAndGlyphs">Alarm Profiles</text>
<path d="M63 49h83q6 0 6 6v3.5q0 4-3 6 3 2 3 6v3.5q0 6-6 6h-83z" fill="#fff"/><path d="M68.6 55h37.7v19.3h-37.7z" fill="#003399"/><path d="M73.2 59.4h26q3 0 3 3v3.4q0 3-3 3h-26z" fill="#fff"/><path d="M113.2 55h31.6q2 0 2 2v2.5q0 2-2 2h-31.6zM113.2 68.5h31.6q2 0 2 2v1.8q0 2-2 2h-31.6z" fill="#003399"/>
<text x="157.35" y="69.8" font-size="28.2" font-weight="bold" fill="#fff" text-anchor="start" textLength="109.99" lengthAdjust="spacingAndGlyphs">DEVA</text>
<text x="158.54" y="79.8" font-size="8.4" fill="#fff" text-anchor="start" textLength="110.46" lengthAdjust="spacingAndGlyphs">BROADCAST</text>
<text x="261.04" y="58" font-size="9.5" fill="#fff" text-anchor="start" textLength="7.93" lengthAdjust="spacingAndGlyphs">®</text>
<text x="153.83" y="842.2" font-size="15.5" fill="#4da6ff" text-anchor="end" textLength="58.46" lengthAdjust="spacingAndGlyphs">Activity :</text>
<text x="153.77" y="864.3" font-size="15.5" fill="#4da6ff" text-anchor="end" textLength="61.86" lengthAdjust="spacingAndGlyphs">Session :</text>
<text x="157.71" y="864.3" font-size="15.5" fill="#fff" text-anchor="start" textLength="39.18" lengthAdjust="spacingAndGlyphs">12:43</text>
<text x="335.92" y="843" font-size="15.5" fill="#4da6ff" text-anchor="end" textLength="74.88" lengthAdjust="spacingAndGlyphs">Multiplex :</text>
<text x="339.16" y="843" font-size="15.5" fill="#fff" text-anchor="start" textLength="98.35" lengthAdjust="spacingAndGlyphs">NURTS Digital</text>
<text x="335.72" y="864.3" font-size="15.5" fill="#4da6ff" text-anchor="end" textLength="51.41" lengthAdjust="spacingAndGlyphs">DVB-T :</text>
<text x="339.62" y="864.3" font-size="15.5" fill="#fff" text-anchor="start" textLength="91.34" lengthAdjust="spacingAndGlyphs">642.000 MHz</text>
<text x="710.78" y="842.2" font-size="15.5" fill="#4da6ff" text-anchor="end" textLength="109.74" lengthAdjust="spacingAndGlyphs">Overall bitrate :</text>
<text x="714.78" y="842.2" font-size="15.5" fill="#fff" text-anchor="start" textLength="87.3" lengthAdjust="spacingAndGlyphs">15.67 Mbit/s</text>
<text x="710.81" y="864.3" font-size="15.5" fill="#4da6ff" text-anchor="end" textLength="85.36" lengthAdjust="spacingAndGlyphs">Net bitrate :</text>
<text x="714.78" y="864.3" font-size="15.5" fill="#fff" text-anchor="start" textLength="87.3" lengthAdjust="spacingAndGlyphs">14.37 Mbit/s</text>
<text x="922.76" y="842.2" font-size="15.5" fill="#4da6ff" text-anchor="end" textLength="81.18" lengthAdjust="spacingAndGlyphs">Device FW :</text>
<text x="926.86" y="842.2" font-size="15.5" fill="#fff" text-anchor="start" textLength="45.88" lengthAdjust="spacingAndGlyphs">1.0.1.1</text>
<text x="922.81" y="864.3" font-size="15.5" fill="#4da6ff" text-anchor="end" textLength="96.67" lengthAdjust="spacingAndGlyphs">Web Version :</text>
<text x="926.84" y="864.3" font-size="15.5" fill="#fff" text-anchor="start" textLength="50.6" lengthAdjust="spacingAndGlyphs">1.11.71</text>
<text x="1089.98" y="842.2" font-size="15.5" fill="#4da6ff" text-anchor="end" textLength="88.9" lengthAdjust="spacingAndGlyphs">Network ID :</text>
<text x="1093.6" y="842.2" font-size="15.5" fill="#fff" text-anchor="start" textLength="43.74" lengthAdjust="spacingAndGlyphs">13209</text>
<text x="1089.78" y="864.3" font-size="15.5" fill="#4da6ff" text-anchor="end" textLength="43.7" lengthAdjust="spacingAndGlyphs">TS ID :</text>
<text x="1094.17" y="864.3" font-size="15.5" fill="#fff" text-anchor="start" textLength="34.84" lengthAdjust="spacingAndGlyphs">5300</text>
<text x="1217.9" y="842.2" font-size="15.5" fill="#4da6ff" text-anchor="end" textLength="51.84" lengthAdjust="spacingAndGlyphs">Temp. :</text>
<text x="1222.2" y="842.2" font-size="15.5" fill="#fff" text-anchor="start" textLength="58.27" lengthAdjust="spacingAndGlyphs">50.00 °C</text>
<text x="1218.0" y="864.3" font-size="15.5" fill="#4da6ff" text-anchor="end" textLength="61.06" lengthAdjust="spacingAndGlyphs">Uptime :</text>
<text x="1222.03" y="864.3" font-size="15.5" fill="#fff" text-anchor="start" textLength="59.41" lengthAdjust="spacingAndGlyphs">20:03:11</text>
<g fill="none" stroke="#0d0dac" stroke-width="1.5" stroke-linecap="butt"><circle cx="235" cy="848" r="1.4" fill="#0d0dac" stroke="none"/><path d="M231.9 845a4.3 4.3 0 0 0 0 6M238.1 845a4.3 4.3 0 0 1 0 6M229.6 843a7.3 7.3 0 0 0 0 10M240.4 843a7.3 7.3 0 0 1 0 10"/></g>
<text x="505.49" y="854.7" font-size="17" fill="#266ccc" text-anchor="start" textLength="55.52" lengthAdjust="spacingAndGlyphs">Record</text>
</svg>
</body></html>
